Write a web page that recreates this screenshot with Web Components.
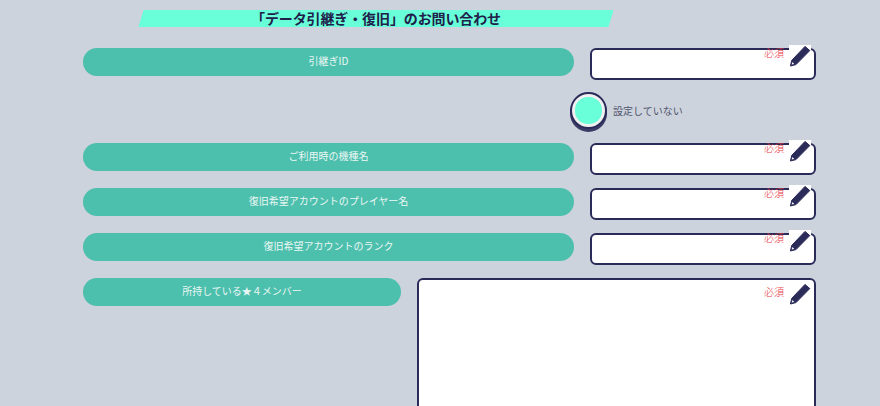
<!DOCTYPE html>
<html lang="ja"><head><meta charset="utf-8">
<style>
html,body{margin:0;height:406px;overflow:hidden;background:#cdd3dd;font-family:"Noto Sans CJK JP","Noto Sans",sans-serif}
</style></head><body>
<inquiry-form>
  <form-title>「データ引継ぎ・復旧」のお問い合わせ</form-title>
  <form-row label="引継ぎID"></form-row>
  <form-toggle>設定していない</form-toggle>
  <form-row label="ご利用時の機種名"></form-row>
  <form-row label="復旧希望アカウントのプレイヤー名"></form-row>
  <form-row label="復旧希望アカウントのランク"></form-row>
  <form-row label="所持している★４メンバー" multiline></form-row>
</inquiry-form>
<template id="pencil"><svg viewBox="0 0 22 22" width="22" height="22" aria-hidden="true"><path d="M16 1.4 20.8 5.6 7 19.6 1.4 21 2.8 15.3Z" fill="#2b2b59" stroke="#2b2b59" stroke-width="1" stroke-linejoin="round"/><path d="M3.4 17.1 5.2 18.9 2.7 19.6Z" fill="#fff"/></svg></template>
<script>
class Base extends HTMLElement{
  render(html){this.attachShadow({mode:'open'}).innerHTML=html}
}
customElements.define('inquiry-form',class extends Base{constructor(){super();this.render(`<style>
:host{display:flex;flex-direction:column;gap:13px;padding:10px 64px 0 83px}
</style><slot></slot>`)}});
customElements.define('form-title',class extends Base{constructor(){super();this.render(`<style>
:host{display:block;width:470px;height:17px;margin:0 0 8px 58px;position:relative;color:#20204a;font-size:14px;font-weight:700;line-height:16px;text-align:center;letter-spacing:-.12px}
.bg{position:absolute;inset:0;background:#69ffd9;transform:skewX(-17deg)}
span{position:relative;display:inline-block}
</style><div class="bg"></div><span><slot></slot></span>`)}});
customElements.define('form-row',class extends Base{constructor(){super();
 const multi=this.hasAttribute('multiline');
 const label=this.getAttribute('label');
 this.render(`<style>
:host{display:flex;gap:16px;align-items:flex-start}
.pill{flex:${multi?'0 0 318px':'1 1 0'};height:28px;border-radius:14px;background:#4dbfad;color:#eaf7f4;font-size:10px;line-height:26px;text-align:center}
.box{flex:${multi?'0 0 399px':'0 0 226px'};box-sizing:border-box;height:${multi?'220px':'32px'};position:relative;background:#fff;border:2px solid #2b2b59;border-radius:6px}
.tag{position:absolute;right:30px;top:${multi?'5px':'-4px'};color:#e6393f;font-size:10px;line-height:14px;font-weight:300}
.pen{position:absolute;right:3px;top:${multi?'3px':'-5px'};width:22px;height:22px;background:${multi?'transparent':'#fff'};display:flex}
svg{display:block}
</style><div class="pill">${label}</div><div class="box"><span class="tag">必須</span><span class="pen"></span></div>`);
 this.shadowRoot.querySelector('.pen').append(document.getElementById('pencil').content.cloneNode(true));
}});
customElements.define('form-toggle',class extends Base{constructor(){super();this.render(`<style>
:host{display:flex;align-items:center;gap:6px;height:37px;padding-left:487px;color:#50536c;font-size:10px}
.knob{box-sizing:border-box;width:37px;height:37px;margin-top:-2px;border-radius:50%;border:2px solid #2b2b59;background:#f0f0f0;box-shadow:0 3px 0 #3b3b66;display:flex;align-items:center;justify-content:center}
.knob i{display:block;width:27px;height:27px;border-radius:48%;background:#69ffd9}
.t{margin-top:-2px}
</style><div class="knob"><i></i></div><span class="t"><slot></slot></span>`)}});
</script>
</body></html>
